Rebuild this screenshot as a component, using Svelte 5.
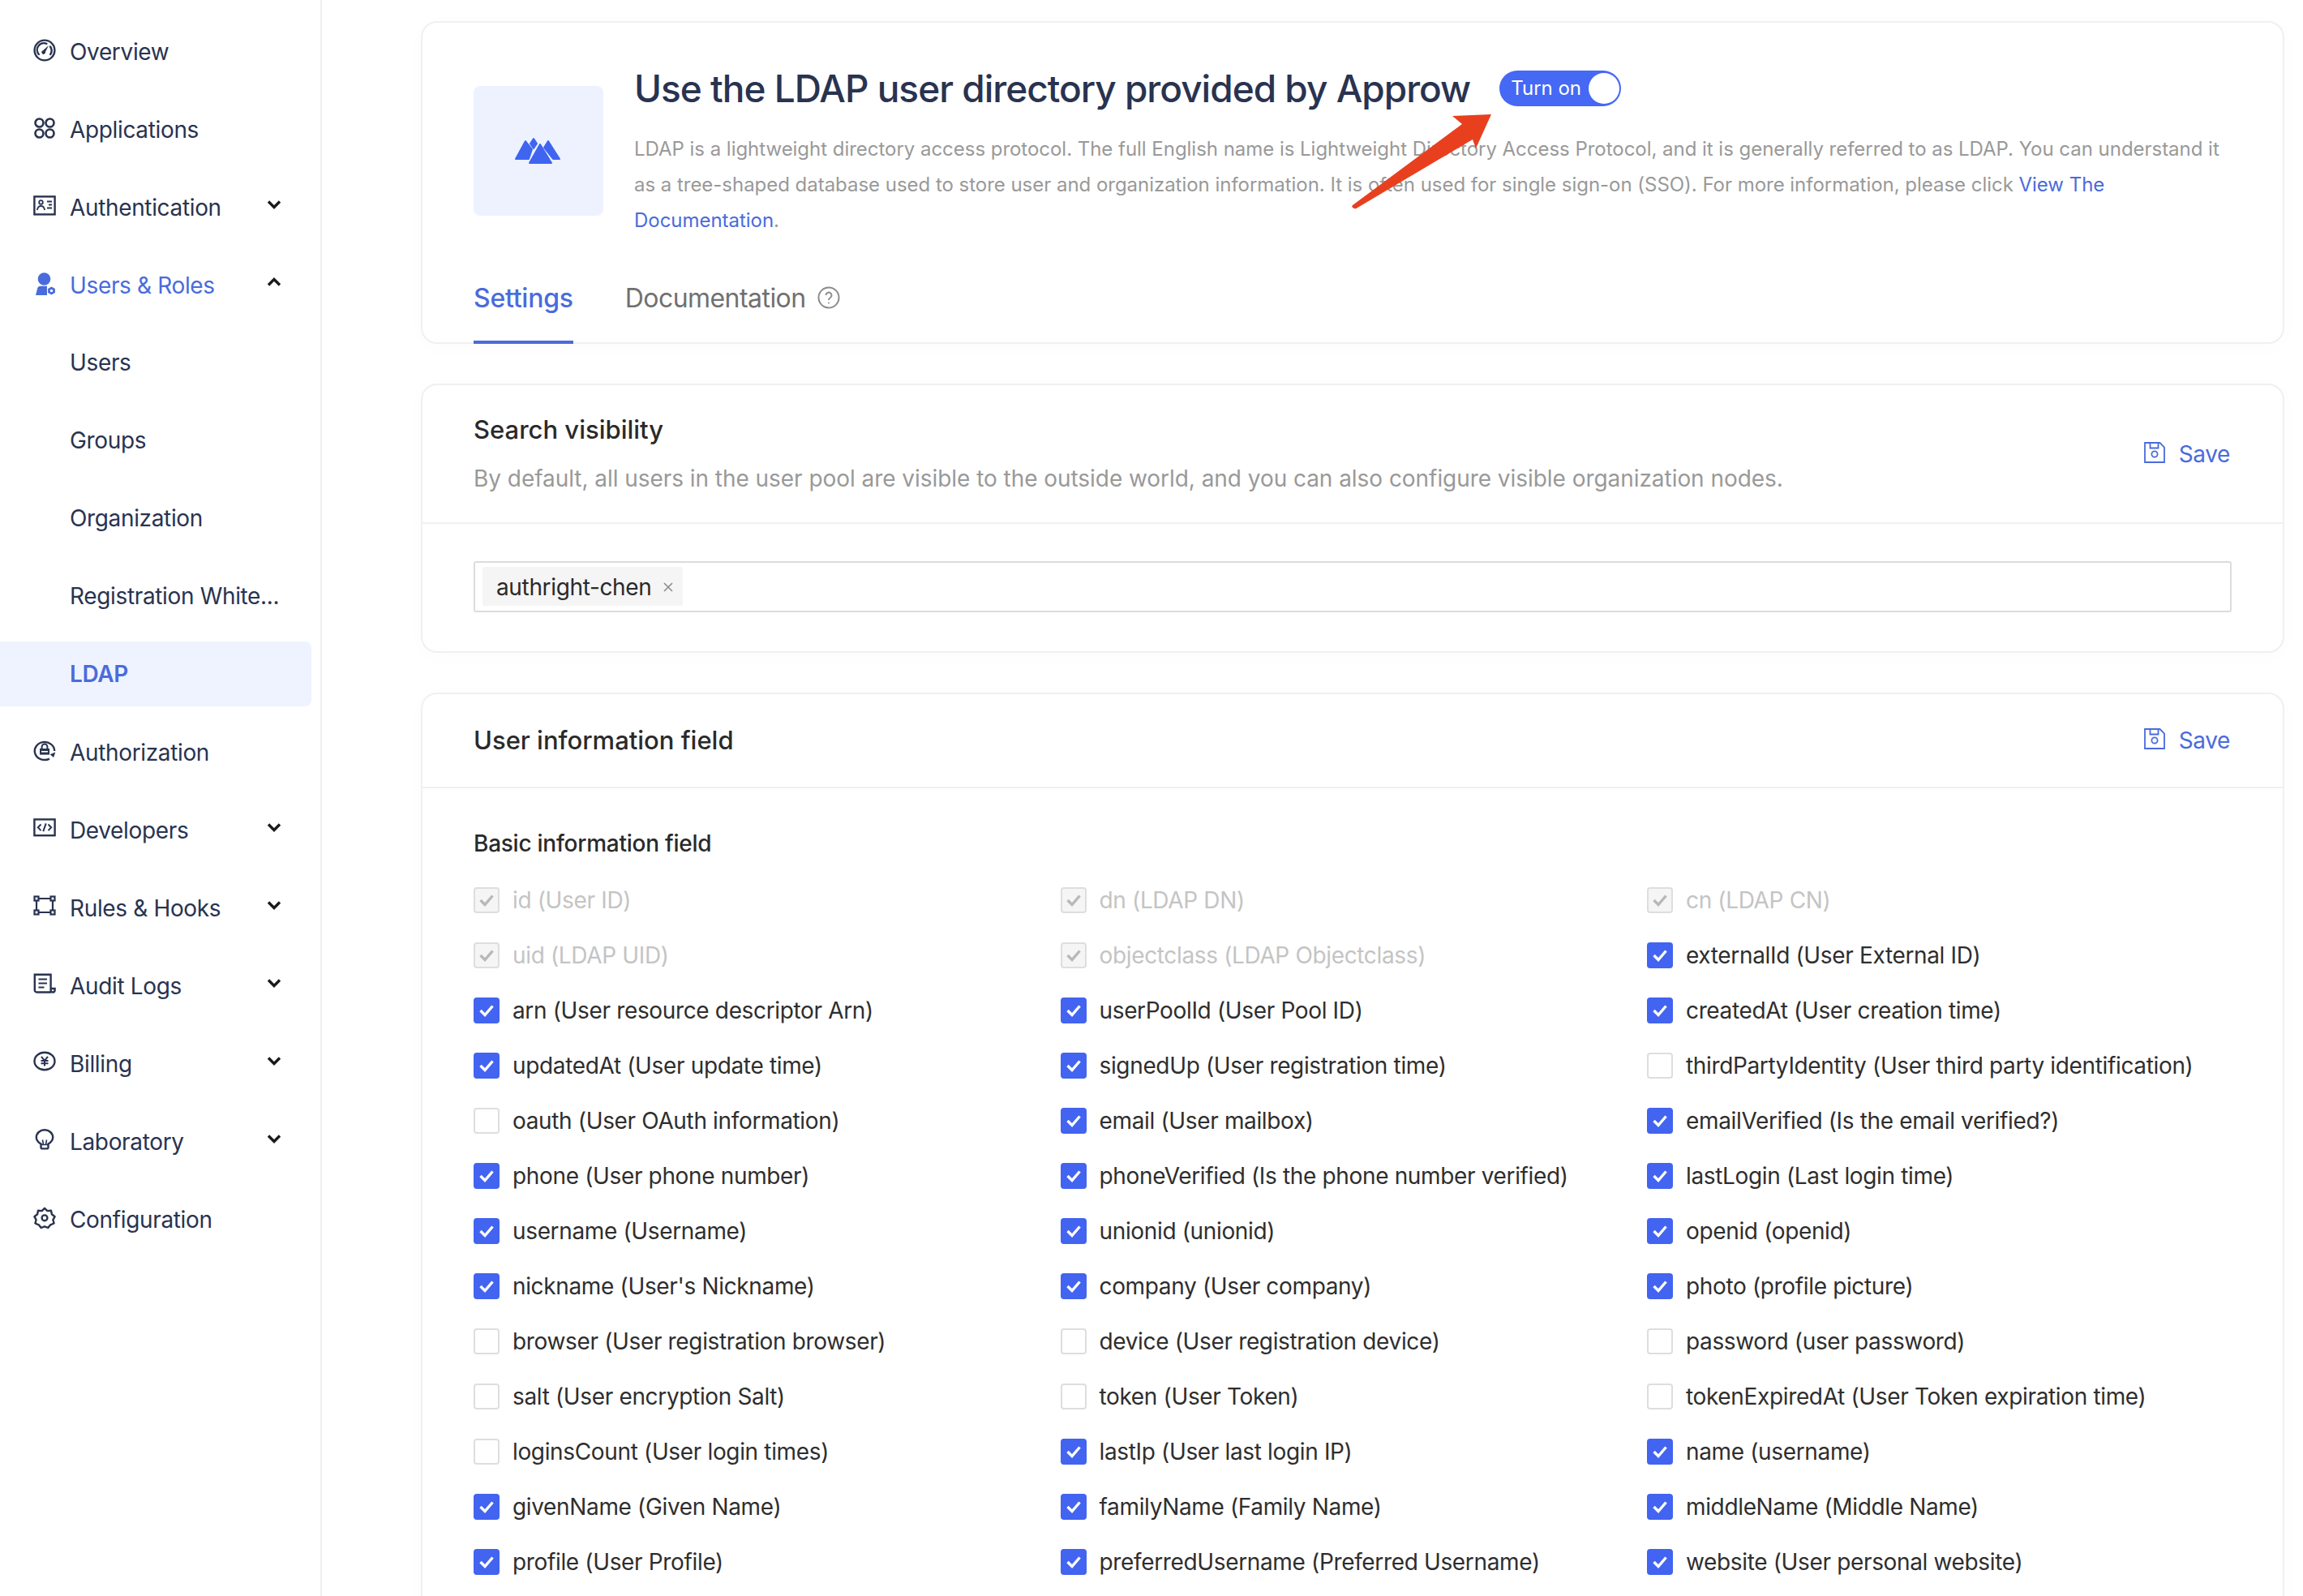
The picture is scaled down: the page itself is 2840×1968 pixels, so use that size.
<script>
  const icons = {
    overview: '<circle cx="14" cy="14" r="12.4" fill="none" stroke-width="2.4"/><path d="M6.8 19a8.4 8.4 0 0 1 9.6-13.2M21 9.5a8.4 8.4 0 0 1 .2 9.5" fill="none" stroke-width="2.4" stroke-linecap="round"/><path d="M12 14.2l7-6.2-4 8a2.4 2.4 0 1 1-3-1.800z" stroke="none" fill="currentColor"/>',
    apps: '<g fill="none" stroke-width="2.6"><circle cx="7.500" cy="7.500" r="5"/><circle cx="20.500" cy="7.500" r="5"/><circle cx="7.500" cy="20.500" r="5"/><circle cx="20.500" cy="20.500" r="5"/></g>',
    authn: '<rect x="1.400" y="2.400" width="25.200" height="22" fill="none" stroke-width="2.400"/><circle cx="9.500" cy="9.500" r="2.300" fill="none" stroke-width="1.800"/><path d="M4.800 19c.6-3.600 2.400-5 4.700-5s4.100 1.400 4.700 5M17 8.500h6M19 12.500h4M17 16.500h6" fill="none" stroke-width="1.800"/>',
    roles: '<circle cx="13.500" cy="8" r="7.800" stroke="none" fill="currentColor"/><path d="M3 28l2.200-8.600c.5-1.700 1.800-2.600 3.500-2.600h8.300v11.200z" stroke="none" fill="currentColor"/><path d="M22.500 17.500l4.400 2.500v5l-4.400 2.500-4.400-2.500v-5z" stroke="none" fill="currentColor"/><circle cx="22.500" cy="22.500" r="1.700" stroke="none" fill="#fff"/>',
    authz: '<path d="M26.200 14A12.200 11 0 1 0 20 23.600" fill="none" stroke-width="2.400"/><path d="M27.300 15.500l-2.200 6.500-4.400-3.800z" stroke="none" fill="currentColor"/><path d="M8 11h12v7.600H8z" stroke="none" fill="currentColor"/><path d="M10.600 11.200V8.800a3.400 3.400 0 0 1 6.800 0v2.400" fill="none" stroke-width="2"/><rect x="10" y="14" width="8" height="1.600" stroke="none" fill="#fff"/>',
    dev: '<rect x="1.400" y="2.400" width="25.200" height="19.800" fill="none" stroke-width="2.400"/><path d="M9.500 8.500L5.800 12.300l3.700 3.800M18.500 8.500l3.700 3.800-3.700 3.800M15.700 7.400l-3.400 9.800" fill="none" stroke-width="2"/>',
    rules: '<g fill="none" stroke-width="2.200"><rect x="1.500" y="1.500" width="5" height="5"/><rect x="21.500" y="1.500" width="5" height="5"/><rect x="1.500" y="18.500" width="5" height="5"/><rect x="21.500" y="18.500" width="5" height="5"/><path d="M6.500 4h15M6.500 21h15M4 6.500v12M24 6.500v12"/></g>',
    audit: '<path d="M22 23.500H4.300a2.500 2.500 0 0 1-2.500-2.500V1.800h19.800V21a2.500 2.500 0 0 0 5 0v-2h-5" fill="none" stroke-width="2.400"/><path d="M6.500 7.500h10.500M6.500 12.500h10.500M6.500 17.500h7" fill="none" stroke-width="2.200"/>',
    billing: '<ellipse cx="14" cy="12.500" rx="12.500" ry="10.800" fill="none" stroke-width="2.400"/><path d="M10 6.800l4 5 4-5M9.500 12h9M9.500 15.300h9M14 12v6.500" fill="none" stroke-width="2"/>',
    lab: '<path d="M9.500 18.500C5.800 16.400 3.800 13.500 3.800 10.500a10.200 9.200 0 0 1 20.400 0c0 3-2 5.900-5.700 8v4.300a1.600 1.600 0 0 1-1.600 1.600h-5.800a1.600 1.600 0 0 1-1.600-1.600z" fill="none" stroke-width="2.400"/><path d="M10 19.500h8M11.500 13.500l1 6M16.500 13.500l-1 6" fill="none" stroke-width="1.600"/>',
    config: '<path d="M14 1.800l3.300 3.300 4.700-.4.900 4.600 3.700 2.900-2.200 4 1.200 4.300-4.400 1.800L18.300 26 14 24.300 9.700 26l-2.900-3.700-4.400-1.800 1.200-4.300-2.200-4 3.700-2.900.9-4.600 4.700.4z" fill="none" stroke-width="2.400" stroke-linejoin="round"/><circle cx="14" cy="13.800" r="3.400" fill="none" stroke-width="2.400"/>'
  };

  const menu = [
    { label: 'Overview', icon: 'overview' },
    { label: 'Applications', icon: 'apps' },
    { label: 'Authentication', icon: 'authn', caret: 'down' },
    { label: 'Users & Roles', icon: 'roles', caret: 'up', open: true },
    { label: 'Users', sub: true },
    { label: 'Groups', sub: true },
    { label: 'Organization', sub: true },
    { label: 'Registration White...', sub: true },
    { label: 'LDAP', sub: true, active: true },
    { label: 'Authorization', icon: 'authz' },
    { label: 'Developers', icon: 'dev', caret: 'down' },
    { label: 'Rules & Hooks', icon: 'rules', caret: 'down' },
    { label: 'Audit Logs', icon: 'audit', caret: 'down' },
    { label: 'Billing', icon: 'billing', caret: 'down' },
    { label: 'Laboratory', icon: 'lab', caret: 'down' },
    { label: 'Configuration', icon: 'config' }
  ];

  // d = disabled and checked, c = checked, u = unchecked
  const fields = [
    ['id (User ID)', 'd'], ['dn (LDAP DN)', 'd'], ['cn (LDAP CN)', 'd'],
    ['uid (LDAP UID)', 'd'], ['objectclass (LDAP Objectclass)', 'd'], ['externalId (User External ID)', 'c'],
    ['arn (User resource descriptor Arn)', 'c'], ['userPoolId (User Pool ID)', 'c'], ['createdAt (User creation time)', 'c'],
    ['updatedAt (User update time)', 'c'], ['signedUp (User registration time)', 'c'], ['thirdPartyIdentity (User third party identification)', 'u'],
    ['oauth (User OAuth information)', 'u'], ['email (User mailbox)', 'c'], ['emailVerified (Is the email verified?)', 'c'],
    ['phone (User phone number)', 'c'], ['phoneVerified (Is the phone number verified)', 'c'], ['lastLogin (Last login time)', 'c'],
    ['username (Username)', 'c'], ['unionid (unionid)', 'c'], ['openid (openid)', 'c'],
    ["nickname (User's Nickname)", 'c'], ['company (User company)', 'c'], ['photo (profile picture)', 'c'],
    ['browser (User registration browser)', 'u'], ['device (User registration device)', 'u'], ['password (user password)', 'u'],
    ['salt (User encryption Salt)', 'u'], ['token (User Token)', 'u'], ['tokenExpiredAt (User Token expiration time)', 'u'],
    ['loginsCount (User login times)', 'u'], ['lastIp (User last login IP)', 'c'], ['name (username)', 'c'],
    ['givenName (Given Name)', 'c'], ['familyName (Family Name)', 'c'], ['middleName (Middle Name)', 'c'],
    ['profile (User Profile)', 'c'], ['preferredUsername (Preferred Username)', 'c'], ['website (User personal website)', 'c']
  ];
</script>

{#snippet saveButton()}
  <button class="save">
    <svg width="26" height="26" viewBox="0 0 26 26" fill="none" stroke="currentColor" stroke-width="1.800">
      <path d="M1 1h18.500L25 6.500V25H1z" />
      <path d="M7.500 1v6.500h10V1" />
      <circle cx="13" cy="15" r="3.600" />
    </svg>
    <span>Save</span>
  </button>
{/snippet}

<div class="layout">
  <aside class="sidebar">
    {#each menu as item}
      <div class="item" class:sub={item.sub} class:active={item.active} class:open={item.open}>
        {#if item.icon}
          <svg class="icon" width="28" height="28" viewBox="0 0 28 28" stroke="currentColor">{@html icons[item.icon]}</svg>
        {/if}
        <span class="label">{item.label}</span>
        {#if item.caret}
          <svg class="caret" class:up={item.caret === 'up'} width="18" height="12" viewBox="0 0 18 12" fill="none" stroke="#1a1a1a" stroke-width="3.400">
            <path d="M2 2.500l7 7 7-7" />
          </svg>
        {/if}
      </div>
    {/each}
  </aside>

  <main class="content">
    <section class="card intro">
      <div class="intro-top">
        <div class="logo">
          <svg width="70" height="40" viewBox="0 0 70 40" fill="#3f65f0" stroke="#3f65f0" stroke-width="2" stroke-linejoin="round">
            <path d="M29 5l-4 6 4 6 4-6z" />
            <path d="M19 8L7 30h16l4-12z" />
            <path d="M47 8l-5 8 11 14h8z" />
            <path d="M37 12L24 35h27z" />
          </svg>
        </div>
        <div class="intro-text">
          <div class="title-row">
            <h1>Use the LDAP user directory provided by Approw</h1>
            <div class="toggle">
              <span>Turn on</span>
              <i class="knob"></i>
            </div>
          </div>
          <p class="desc">
            LDAP is a lightweight directory access protocol. The full English name is Lightweight Directory Access Protocol, and it is generally referred to as LDAP. You can understand it as a tree-shaped database used to store user and organization information. It is often used for single sign-on (SSO). For more information, please click <a href="#docs">View The Documentation</a>.
          </p>
        </div>
      </div>
      <nav class="tabs">
        <div class="tab selected">Settings</div>
        <div class="tab">
          Documentation
          <svg width="28" height="28" viewBox="0 0 28 28" fill="none" stroke="#8c8c8c" stroke-width="2">
            <circle cx="14" cy="14" r="12.500" />
            <path d="M10.500 11a3.500 3.500 0 1 1 5.400 3c-1.300.8-1.900 1.500-1.900 3" />
            <circle cx="14" cy="20.500" r="1" fill="#8c8c8c" stroke="none" />
          </svg>
        </div>
      </nav>
    </section>

    <section class="card">
      <header class="head search-head">
        <div>
          <h2>Search visibility</h2>
          <p class="sub-desc">By default, all users in the user pool are visible to the outside world, and you can also configure visible organization nodes.</p>
        </div>
        {@render saveButton()}
      </header>
      <div class="search-body">
        <div class="select">
          <span class="tag">
            authright-chen
            <svg width="14" height="14" viewBox="0 0 14 14" fill="none" stroke="#8c8c8c" stroke-width="1.600"><path d="M2 2l10 10M12 2L2 12" /></svg>
          </span>
        </div>
      </div>
    </section>

    <section class="card">
      <header class="head field-head">
        <h2>User information field</h2>
        {@render saveButton()}
      </header>
      <div class="field-body">
        <h3>Basic information field</h3>
        <div class="grid">
          {#each fields as [text, state]}
            <label class="field" class:disabled={state === 'd'}>
              <span class="box {state}">
                {#if state !== 'u'}
                  <svg width="20" height="16" viewBox="0 0 20 16" fill="none" stroke="currentColor" stroke-width="3.400"><path d="M2.500 8l5.500 5.500L17.500 2.500" /></svg>
                {/if}
              </span>
              {text}
            </label>
          {/each}
        </div>
      </div>
    </section>
  </main>

  <svg class="arrow" width="190" height="135" viewBox="0 0 190 135">
    <path d="M177 5L129 7l12 10L6 117c-1 1-1 2 0 3l2 1c1 .5 1.500.5 2.500 0L154 36l4 11z" fill="#e8401f" />
  </svg>
</div>

<style>
  :global(body) {
    margin: 0;
    background: #fff;
    font-family: Inter, "Liberation Sans", sans-serif;
  }

  .layout {
    position: relative;
    display: flex;
    width: 2840px;
    height: 1968px;
    overflow: hidden;
    color: #293350;
  }

  .sidebar {
    box-sizing: border-box;
    flex: 0 0 397px;
    padding: 24px 0 0;
    border-right: 2px solid #eeeeee;
    display: flex;
    flex-direction: column;
    gap: 16px;
  }

  .item {
    position: relative;
    box-sizing: border-box;
    width: 384px;
    height: 80px;
    flex: none;
    display: flex;
    align-items: center;
    padding-left: 41px;
    font-size: 28px;
    letter-spacing: -0.35px;
    border-radius: 0 8px 8px 0;
  }

  .item .icon {
    flex: none;
    margin-right: 17px;
    margin-top: -4px;
  }

  .item.sub {
    padding-left: 86px;
  }

  .item.sub:not(.active) {
    top: -1px;
  }

  .item.open {
    color: #4a6bdc;
  }

  .item.active {
    top: -1px;
    background: #eff3ff;
    color: #4a6bdc;
    font-weight: 600;
  }

  .caret {
    position: absolute;
    left: 329px;
    top: 30px;
  }

  .caret.up {
    transform: rotate(180deg);
  }

  .content {
    box-sizing: border-box;
    flex: none;
    width: 2298px;
    margin-left: 122px;
    padding-top: 26px;
    display: flex;
    flex-direction: column;
    gap: 49px;
  }

  .card {
    box-sizing: border-box;
    border: 2px solid #f0f0f0;
    border-radius: 20px;
    background: #fff;
    box-shadow: 0 4px 30px rgba(40, 60, 140, 0.015);
    flex: none;
  }

  .intro {
    height: 398px;
    padding: 58px 0 0 63px;
  }

  .intro-top {
    display: flex;
    gap: 38px;
  }

  .logo {
    flex: none;
    width: 160px;
    height: 160px;
    margin-top: 20px;
    border-radius: 8px;
    background: #eef2ff;
    display: flex;
    align-items: center;
    justify-content: center;
  }

  .title-row {
    display: flex;
    align-items: center;
    gap: 36px;
    height: 45px;
  }

  h1 {
    margin: 0;
    font-size: 46px;
    font-weight: 500;
    line-height: 48px;
    letter-spacing: -1px;
    white-space: nowrap;
  }

  .toggle {
    box-sizing: border-box;
    width: 150px;
    height: 44px;
    border-radius: 22px;
    background: #4568f5;
    color: #fff;
    font-size: 24px;
    display: flex;
    align-items: center;
    justify-content: space-between;
    padding: 0 2px 0 14px;
  }

  .knob {
    width: 38px;
    height: 38px;
    border-radius: 50%;
    background: #fff;
  }

  .desc {
    margin: 31px 0 0;
    width: 1980px;
    font-size: 24px;
    line-height: 44px;
    letter-spacing: -0.03px;
    color: #999999;
  }

  .desc a {
    color: #4a6bdc;
    text-decoration: none;
  }

  .tabs {
    display: flex;
    gap: 64px;
    margin-top: 53px;
  }

  .tab {
    display: flex;
    align-items: center;
    gap: 14px;
    height: 40px;
    padding: 0 0 33px;
    font-size: 32px;
    letter-spacing: -0.55px;
    color: #707070;
    border-bottom: 4px solid transparent;
  }

  .tab.selected {
    color: #4a6bdc;
    font-weight: 500;
    letter-spacing: -0.25px;
    border-bottom-color: #4a6bdc;
  }

  .head {
    display: flex;
    align-items: center;
    justify-content: space-between;
    box-sizing: border-box;
    padding: 0 65px 0 63px;
    border-bottom: 2px solid #f0f0f0;
  }

  .search-head {
    height: 171px;
  }

  .field-head {
    height: 116px;
  }

  h2 {
    margin: 0;
    font-size: 31px;
    font-weight: 500;
    line-height: 36px;
    color: #2a2a2a;
  }

  .sub-desc {
    margin: 24px 0 0;
    font-size: 28px;
    line-height: 36px;
    letter-spacing: -0.05px;
    color: #999999;
  }

  .save {
    display: flex;
    align-items: center;
    gap: 17px;
    border: 0;
    padding: 0;
    background: none;
    color: #4a6bdc;
    font: inherit;
    font-size: 28px;
    letter-spacing: -0.4px;
  }

  .save svg {
    margin-top: -4px;
  }

  .search-body {
    padding: 46px 63px 48px;
  }

  .select {
    box-sizing: border-box;
    width: 2168px;
    height: 63px;
    border: 2px solid #dcdcdc;
    border-radius: 3px;
    padding: 5px 9px;
  }

  .tag {
    display: inline-flex;
    align-items: center;
    gap: 13px;
    box-sizing: border-box;
    height: 48px;
    padding: 2px 11px 0 17px;
    border-radius: 3px;
    background: #f5f5f5;
    font-size: 28px;
    letter-spacing: -0.35px;
    color: #2a2a2a;
  }

  .field-body {
    padding: 50px 63px 100px;
  }

  h3 {
    margin: 0;
    font-size: 28px;
    font-weight: 500;
    line-height: 36px;
    letter-spacing: -0.25px;
    color: #2a2a2a;
  }

  .grid {
    display: grid;
    grid-template-columns: repeat(3, 723.5px);
    grid-auto-rows: 68px;
    margin-top: 18px;
  }

  .field {
    display: flex;
    align-items: center;
    gap: 16px;
    font-size: 28px;
    letter-spacing: -0.35px;
    color: #2e2e2e;
    white-space: nowrap;
  }

  .field.disabled {
    color: #c4c4c4;
  }

  .box {
    box-sizing: border-box;
    flex: none;
    width: 32px;
    height: 32px;
    border-radius: 4px;
    display: flex;
    align-items: center;
    justify-content: center;
    border: 2px solid #dedede;
  }

  .box.c {
    background: #4264f0;
    border-color: #4264f0;
    color: #fff;
  }

  .box.d {
    background: #f5f5f5;
    color: #b8b8b8;
  }

  .arrow {
    position: absolute;
    left: 1662px;
    top: 136px;
  }
</style>
